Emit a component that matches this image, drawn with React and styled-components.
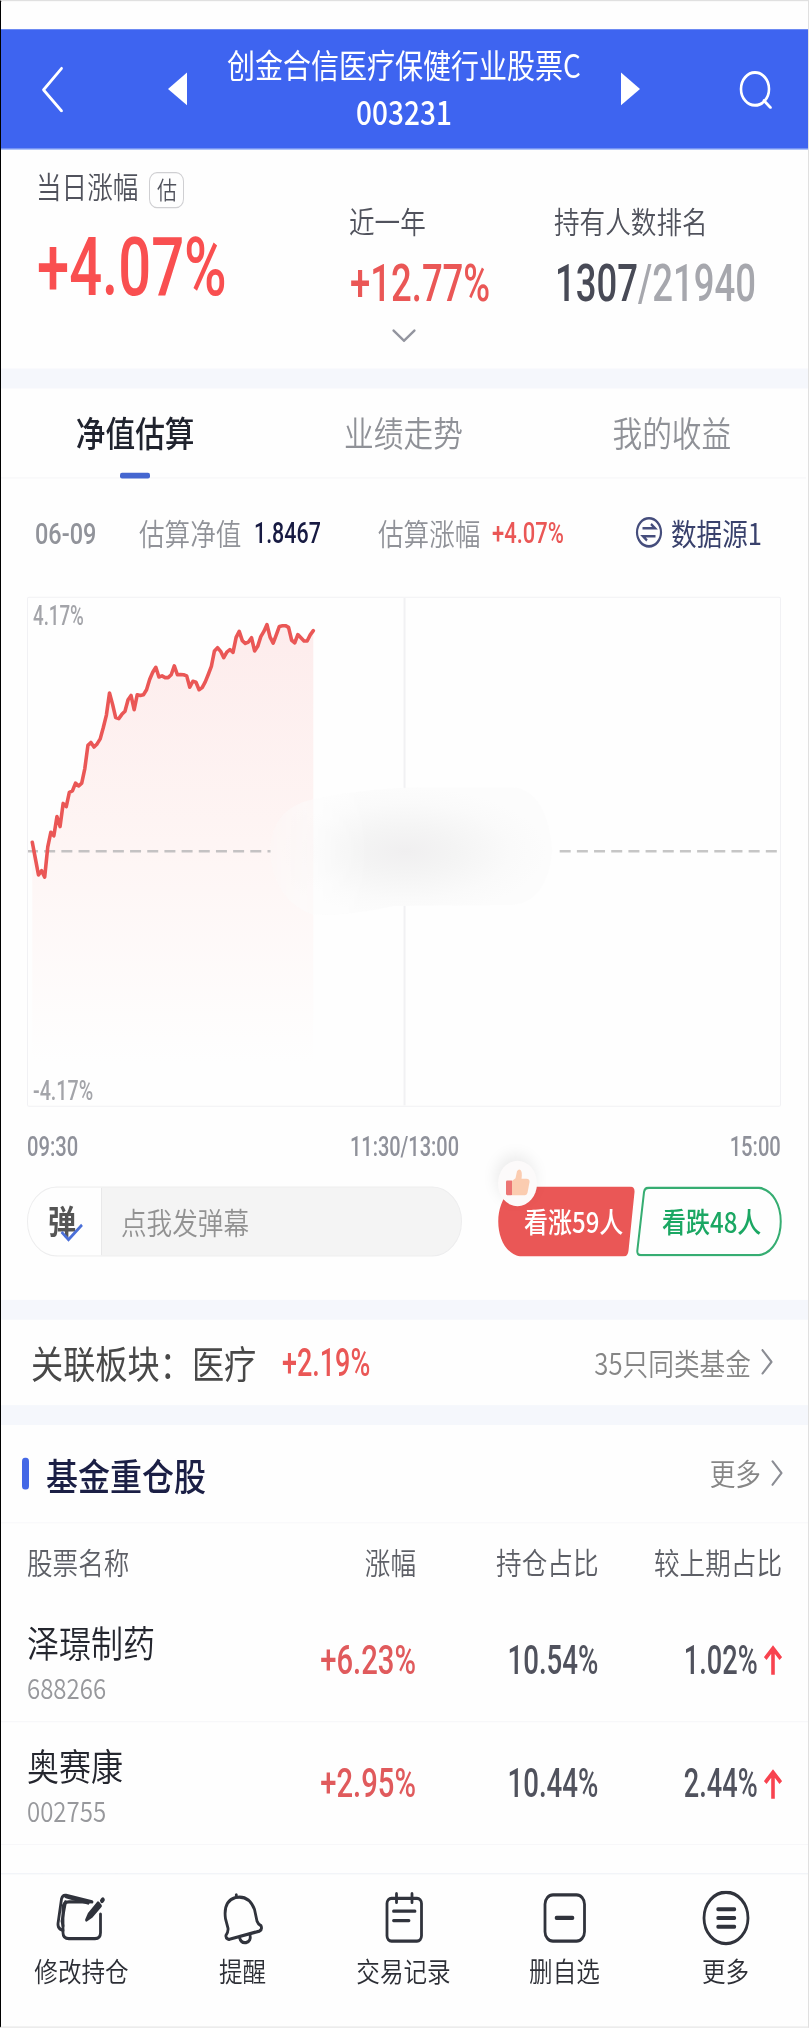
import styled, { createGlobalStyle, css } from "styled-components";

// The whole page is drawn at natural proportions and then stretched
// vertically, v() turns an on-screen height into a page height.
const STRETCH = 1.17;
const v = (px) => `${(px / STRETCH).toFixed(2)}px`;

const RED = "#ea5756";

// intraday estimate, one value per step, measured from the top of the plot
const QUOTES = [
  762, 808, 854, 842, 860, 775, 734, 744, 690, 718, 653, 662, 622, 618, 596,
  604, 596, 555, 490, 482, 495, 486, 472, 440, 405, 343, 375, 412, 415, 403,
  394, 362, 350, 390, 348, 350, 348, 334, 305, 285, 271, 298, 295, 300, 300,
  292, 267, 292, 291, 292, 295, 327, 310, 313, 334, 328, 312, 291, 268, 225,
  216, 226, 244, 228, 221, 229, 187, 170, 196, 204, 200, 188, 225, 212, 185,
  170, 151, 186, 203, 180, 156, 154, 154, 159, 195, 202, 179, 188, 197, 197,
  180, 168,
];

const stocks = [
  {
    name: "泽璟制药",
    code: "688266",
    change: "+6.23%",
    share: "10.54%",
    diff: "1.02%",
  },
  {
    name: "奥赛康",
    code: "002755",
    change: "+2.95%",
    share: "10.44%",
    diff: "2.44%",
  },
];

const Num = ({ children, ...rest }) => (
  <NumBox {...rest}>
    <span>{children}</span>
  </NumBox>
);

const Chevron = ({ w, h, d, color = "#8b8d94", stroke = 2 }) => (
  <svg
    width={w}
    height={h}
    viewBox={`0 0 ${w} ${h}`}
    fill="none"
    stroke={color}
    strokeWidth={stroke}
    strokeLinecap="round"
    strokeLinejoin="round"
  >
    <path d={d} />
  </svg>
);

const RightChevron = () => (
  <Chevron w={12} h={22} d="M1.5 1 L10.5 11 L1.5 21" />
);

const UpArrow = () => (
  <svg
    width="18"
    height="26"
    viewBox="0 0 18 26"
    fill="none"
    stroke="#f8434f"
    strokeWidth="3.6"
  >
    <path d="M9 25.5 V2.5 M1.2 11.5 L9 2.8 L16.8 11.5" />
  </svg>
);

const Chart = () => {
  const points = QUOTES.map((q, i) => [
    4.3 + i * 3.092,
    (q - 76) / 2.8,
  ]);
  const line = points
    .map(([x, y]) => `${x.toFixed(1)},${y.toFixed(1)}`)
    .join(" ");
  const last = points[points.length - 1][0];
  return (
    <Plot>
      <svg viewBox="0 0 753 509" preserveAspectRatio="none">
        <defs>
          <linearGradient id="fall" x1="0" y1="0" x2="0" y2="1">
            <stop offset="0" stopColor="#fdecec" />
            <stop offset="0.5" stopColor="#fef5f4" />
            <stop offset="1" stopColor="#fefefe" />
          </linearGradient>
          <radialGradient id="smudge" cx="0.48" cy="0.5" r="0.5">
            <stop offset="0" stopColor="#f0eff0" />
            <stop offset="0.35" stopColor="#f4f4f4" />
            <stop offset="0.75" stopColor="#fafafa" />
            <stop offset="1" stopColor="#fcfcfc" />
          </radialGradient>
          <linearGradient id="fade" x1="0" y1="0" x2="1" y2="0">
            <stop offset="0" stopColor="#fff" stopOpacity="0.2" />
            <stop offset="0.16" stopColor="#fff" stopOpacity="0.55" />
            <stop offset="0.35" stopColor="#fff" />
          </linearGradient>
          <mask id="edge">
            <rect x="240" y="180" width="290" height="150" fill="url(#fade)" />
          </mask>
        </defs>
        <polygon
          points={`4.3,465 ${line} ${last},465`}
          fill="url(#fall)"
        />
        <path d="M377 0 V509" stroke="#f1f1f3" strokeWidth="2" />
        <path
          d="M-1 254 H243"
          stroke="#c4c2c3"
          strokeWidth="2.6"
          strokeDasharray="11 6.2"
        />
        <path
          d="M532.4 254 H753"
          stroke="#c6c6c6"
          strokeWidth="2.6"
          strokeDasharray="11 6.2"
        />
        <rect x="370" y="192" width="14" height="116" fill="#fafafa" />
        <path
          d="M242 254 Q244 210 286 202 Q340 190 400 190 L486 190 Q520 194 525 254 Q520 304 486 308 L366 309 Q330 318 286 318 Q246 304 242 254Z"
          fill="url(#smudge)"
          mask="url(#edge)"
        />
        <polyline
          points={line}
          fill="none"
          stroke={RED}
          strokeWidth="3.6"
          strokeLinejoin="round"
          strokeLinecap="round"
        />
      </svg>
      <Num $size={23.4} $scale={0.8} $w={52} $color="#a3a4a9">
        4.17%
      </Num>
      <Num $size={23.4} $scale={0.84} $w={60} $color="#a3a4a9">
        -4.17%
      </Num>
    </Plot>
  );
};

const App = () => (
  <>
    <Global />
    <Page>
      <StatusBar />
      <Header>
        <BackSlot>
          <Chevron
            w={24}
            h={40}
            color="#fff"
            stroke={2.6}
            d="M20.5 2.5 L2.5 20.8 L20.5 38.8"
          />
        </BackSlot>
        <Triangle />
        <FundTitle>
          <span>创金合信医疗保健行业股票C</span>
          <FundCode>003231</FundCode>
        </FundTitle>
        <Triangle $right />
        <SearchSlot>
          <svg
            width="36"
            height="34"
            viewBox="0 0 36 34"
            fill="none"
            stroke="#fff"
            strokeWidth="2.6"
          >
            <circle cx="17" cy="17" r="14" />
            <path d="M26 27 L32.5 33" strokeLinecap="round" />
          </svg>
        </SearchSlot>
      </Header>

      <Stats>
        <StatToday>
          <StatLabel>
            <TodayText>当日涨幅</TodayText>
            <Badge>估</Badge>
          </StatLabel>
          <Num $size={69} $scale={0.84} $w={188} $lh={90} $color="#f94f50">
            +4.07%
          </Num>
        </StatToday>
        <Stat $w={205}>
          <StatLabel>近一年</StatLabel>
          <Num $size={44.5} $scale={0.82} $w={140} $lh={62} $color={RED}>
            +12.77%
          </Num>
        </Stat>
        <Stat>
          <StatLabel>持有人数排名</StatLabel>
          <Num $size={44.5} $scale={0.82} $w={200} $lh={62} $color="#484a56">
            1307<i>/21940</i>
          </Num>
        </Stat>
      </Stats>
      <Expand>
        <Chevron
          w={24}
          h={12}
          stroke={2.2}
          color="#93959f"
          d="M1.5 1.5 L12 10.3 L22.5 1.5"
        />
      </Expand>

      <Gap $h={19.5} />

      <Tabs>
        <Tab $active>净值估算</Tab>
        <Tab>业绩走势</Tab>
        <Tab>我的收益</Tab>
      </Tabs>

      <Estimate>
        <Num $size={25.8} $scale={0.91} $w={104} $color="#91939a">
          06-09
        </Num>
        <EstLabel $w={115}>估算净值</EstLabel>
        <Num $size={25.8} $scale={0.83} $w={124} $color="#171a42">
          1.8467
        </Num>
        <EstLabel $w={114}>估算涨幅</EstLabel>
        <Num $size={25.8} $scale={0.85} $w={143} $color={RED}>
          +4.07%
        </Num>
        <Source>
          <svg
            width="28"
            height="28"
            viewBox="0 0 28 28"
            fill="none"
            stroke="#454d7c"
            strokeWidth="2.2"
          >
            <circle cx="14" cy="14" r="12" />
            <path d="M7.5 10.5 H20 L16 6.9 M20.5 17.4 H8 L12 21" />
          </svg>
          数据源1
        </Source>
      </Estimate>

      <Chart />
      <Times>
        <Num $size={23.2} $scale={0.87} $w={51} $color="#8f919a">
          09:30
        </Num>
        <Num $size={23.2} $scale={0.86} $w={109} $color="#8f919a">
          11:30/13:00
        </Num>
        <Num $size={23.2} $scale={0.87} $w={51} $color="#8f919a" $end>
          15:00
        </Num>
      </Times>

      <Actions>
        <Danmu>
          <DanmuToggle>
            弹
            <svg width="26" height="18" viewBox="0 0 26 18" fill="none">
              <path
                d="M2.5 8 L9.5 14.5 L23 2"
                stroke="#4a6fd8"
                strokeWidth="2.6"
              />
            </svg>
          </DanmuToggle>
          <DanmuHint>点我发弹幕</DanmuHint>
        </Danmu>
        <Vote $w={137} $color="#fff" $indent={26}>
          <svg width="137" height="60" viewBox="0 0 137 60">
            <path
              d="M22 0 H132 Q137 0 136.5 5 L130.5 55 Q130 60 125 60 H22 C-7 55 -7 5 22 0Z"
              fill={RED}
            />
          </svg>
          <Thumb>
            <svg width="26" height="28" viewBox="0 0 26 28">
              <rect x="1" y="11" width="6.5" height="12.5" rx="1.2" fill="#ec7473" />
              <path
                d="M7 11.5 L10.5 9 L12 3 Q13.5 1 15.5 2 Q17.5 3.5 16.5 9.5 H21.5 Q25 9.5 24.5 12.5 L22.5 21.5 Q22 23.5 20 23.5 H7Z"
                fill="#fbccb0"
              />
            </svg>
          </Thumb>
          <span>看涨59人</span>
        </Vote>
        <Vote $w={146} $color="#1ba763" $indent={26}>
          <svg width="146" height="60" viewBox="0 0 146 60" fill="none">
            <path
              d="M13 1.2 H123 C152 5 152 55 123 58.8 H5 Q1 58.8 1.3 55 L8 5 Q8.6 1.2 13 1.2Z"
              stroke="#36ad72"
              strokeWidth="2"
            />
          </svg>
          <span>看跌48人</span>
        </Vote>
      </Actions>

      <Gap $h={20} />
      <Related>
        <RelatedName>关联板块：医疗</RelatedName>
        <Num $size={33.3} $scale={0.81} $w={100} $color={RED}>
          +2.19%
        </Num>
        <More $right={35}>
          <span>35只同类基金</span>
          <RightChevron />
        </More>
      </Related>
      <Gap $h={20} />

      <SectionHead>
        <Marker />
        <SectionTitle>基金重仓股</SectionTitle>
        <More $right={25}>
          <span>更多</span>
          <RightChevron />
        </More>
      </SectionHead>
      <ColumnHead>
        <span>股票名称</span>
        <span>涨幅</span>
        <span>持仓占比</span>
        <span>较上期占比</span>
      </ColumnHead>
      {stocks.map((stock) => (
        <StockRow key={stock.code}>
          <StockName>
            {stock.name}
            <small>{stock.code}</small>
          </StockName>
          <Num $size={34.8} $scale={0.84} $w={120} $color="#e05a5c" $end>
            {stock.change}
          </Num>
          <Num $size={34.8} $scale={0.795} $w={120} $color="#50525d" $end>
            {stock.share}
          </Num>
          <Diff>
            <Num $size={34.8} $scale={0.78} $w={80} $color="#50525d" $end>
              {stock.diff}
            </Num>
            <UpArrow />
          </Diff>
        </StockRow>
      ))}
      <StockPeek>
        <StockName>海思科</StockName>
      </StockPeek>

      <BottomBar>
        <BarItem $shift={2.5}>
          <svg width="54" height="48" viewBox="0 0 54 48">
            <path d="M11 34 L8.5 33 Q5.5 31 6 28 L9.5 7 Q10.5 3.5 14 4 L40 9.5" />
            <path d="M11 30 L10 26 L13.5 9.5" />
            <path d="M14 5 L36 10.5" />
            <path d="M38 9.5 H17 Q11 9.5 11 15 V36 Q11 41 17 41 H43 Q48.5 41 48.5 36 V20" />
            <path d="M34.5 25 L37 20 L46 10.5 L48.5 13 L39.5 22Z" fill="#30333c" />
            <path d="M50 8.5 L50.8 7.8" strokeWidth="4" />
          </svg>
          修改持仓
        </BarItem>
        <BarItem $shift={4.5}>
          <svg width="54" height="48" viewBox="0 0 54 48">
            <path d="M25.3 5.5 V3.5 M16.5 41 Q14.5 40 15 38 Q17.5 35 17 32 L14.5 24 Q12 9 24.5 5.8 Q38 3.5 43.5 16 L46 26 Q47 28.5 50 30 Q51.5 33 48.5 34.5 L18.5 41.5 Q17 41.8 16.5 41Z" />
            <path d="M28.5 40 Q30 45 35 44.3 Q40.5 43 39 37.5" />
          </svg>
          提醒
        </BarItem>
        <BarItem>
          <svg width="54" height="48" viewBox="0 0 54 48">
            <rect x="10" y="6.5" width="34.5" height="36.5" rx="4.5" />
            <path d="M19.5 2.5 V10 M35 2.5 V10 M16.5 17.5 H38 M16.5 25.5 H32" />
          </svg>
          交易记录
        </BarItem>
        <BarItem>
          <svg width="54" height="48" viewBox="0 0 54 48">
            <rect x="7" y="3.5" width="39.5" height="39.5" rx="8" />
            <path d="M18.5 23.3 H34.5" strokeWidth="3.6" />
          </svg>
          删自选
        </BarItem>
        <BarItem>
          <svg width="54" height="48" viewBox="0 0 54 48">
            <circle cx="27" cy="23.3" r="22" />
            <path d="M19 15.8 H35.5 M19 23.3 H35.5 M19 30.8 H35.5" strokeWidth="3.4" />
          </svg>
          更多
        </BarItem>
      </BottomBar>
    </Page>
  </>
);

const Global = createGlobalStyle`
  body {
    margin: 0;
    background: #fff;
  }
  #root {
    height: 2028px;
  }
  * {
    box-sizing: border-box;
  }
  svg {
    flex: none;
    display: block;
  }
`;

const Page = styled.div`
  width: 809px;
  height: ${v(2028)};
  display: flex;
  flex-direction: column;
  overflow: hidden;
  border: 1px solid #e0e0e0;
  border-left-color: #000;
  background: #fefefe;
  font-family: "Noto Sans CJK SC", sans-serif;
  font-weight: 350;
  line-height: 1;
  white-space: nowrap;
  transform: scaleY(${STRETCH});
  transform-origin: 0 0;
  > * {
    flex-shrink: 0;
  }
`;

const NumBox = styled.span`
  display: flex;
  flex: none;
  width: ${(p) => p.$w}px;
  justify-content: ${(p) => (p.$end ? "flex-end" : "flex-start")};
  font-family: Roboto, sans-serif;
  font-size: ${(p) => p.$size}px;
  font-weight: 500;
  line-height: ${(p) => (p.$lh ? v(p.$lh) : 1)};
  color: ${(p) => p.$color};
  span {
    transform: scaleX(${(p) => p.$scale});
    transform-origin: ${(p) => (p.$end ? "100% 50%" : "0 50%")};
  }
  i {
    font-style: normal;
    font-weight: 500;
    color: #a6a7ad;
  }
`;

const StatusBar = styled.div`
  height: ${v(28)};
`;

const Header = styled.header`
  display: flex;
  align-items: center;
  height: ${v(120.4)};
  background: #3e64f0;
  border-bottom: 1px solid #c4d6fb;
  color: #fff;
`;

const BackSlot = styled.div`
  width: 167px;
  padding-left: 40px;
`;

const Triangle = styled.i`
  border: solid transparent;
  border-width: 14.7px 0;
  ${(p) =>
    p.$right
      ? css`
          border-left: 19px solid #fff;
        `
      : css`
          border-right: 19px solid #fff;
        `}
`;

const FundTitle = styled.h1`
  width: 434px;
  margin: 0;
  padding-bottom: 1px;
  display: flex;
  flex-direction: column;
  align-items: center;
  font-size: 28px;
  font-weight: 400;
  line-height: ${v(47.5)};
`;

const FundCode = styled.span`
  margin-top: -0.5px;
  font-weight: 500;
`;

const SearchSlot = styled.div`
  margin-left: 98px;
`;

const Stats = styled.section`
  display: flex;
  height: ${v(176)};
  padding: ${v(22)} 0 0 35px;
`;

const StatToday = styled.div`
  width: 313px;
  > span {
    margin-top: ${v(15.5)};
    margin-left: 1px;
  }
`;

const Stat = styled.div`
  width: ${(p) => p.$w}px;
  padding-top: ${v(29.5)};
  > span {
    margin-top: ${v(14.5)};
  }
`;

const StatLabel = styled.div`
  display: flex;
  align-items: center;
  height: ${v(37)};
  font-size: 25.6px;
  color: #50525c;
  & + span {
    margin-left: 1px;
  }
`;

const TodayText = styled.span`
  padding-bottom: 9px;
`;

const Badge = styled.span`
  display: flex;
  align-items: center;
  justify-content: center;
  width: 35px;
  height: ${v(37)};
  margin-left: 11px;
  border: 1.6px solid #cfcfd2;
  border-radius: 8px;
  font-size: 20px;
`;

const Expand = styled.div`
  display: flex;
  justify-content: center;
  height: ${v(43)};
  padding: ${v(3)} 2px 0 0;
`;

const Gap = styled.div`
  height: ${(p) => v(p.$h)};
  background: #f5f7fc;
`;

const Tabs = styled.nav`
  display: grid;
  grid-template-columns: repeat(3, 1fr);
  height: ${v(90)};
  margin-right: 2px;
  border-bottom: 1.5px solid #f6f6f8;
`;

const Tab = styled.div`
  display: flex;
  flex-direction: column;
  align-items: center;
  padding-top: ${v(24)};
  font-size: 29.7px;
  line-height: ${v(42)};
  color: ${(p) => (p.$active ? "#20232e" : "#8f9197")};
  font-weight: ${(p) => (p.$active ? 500 : 350)};
  ${(p) =>
    p.$active &&
    css`
      &::after {
        content: "";
        width: 30px;
        height: ${v(6)};
        margin-top: ${v(19)};
        border-radius: 2px;
        background: #4466d0;
      }
    `}
`;

const Estimate = styled.div`
  display: flex;
  align-items: center;
  height: ${v(111)};
  padding-left: 34px;
  > span:first-child {
    margin-top: 2px;
  }
`;

const EstLabel = styled.span`
  width: ${(p) => p.$w}px;
  padding-bottom: 2.5px;
  font-size: 25.6px;
  color: #909298;
`;

const Source = styled.span`
  display: flex;
  align-items: center;
  gap: 8px;
  padding-bottom: 3px;
  font-size: 25.6px;
  font-weight: 400;
  color: #39416c;
  svg {
    margin-top: 2px;
  }
`;

const Plot = styled.div`
  position: relative;
  display: flex;
  flex-direction: column;
  justify-content: space-between;
  width: 754px;
  height: ${v(510)};
  margin: ${v(7.5)} 0 0 26px;
  padding: 4px 0 0 5px;
  border: 1.6px solid #f1f1f4;
  border-radius: 2px;
  svg {
    position: absolute;
    inset: 0;
    width: 100%;
    height: 100%;
  }
  > span {
    position: relative;
  }
`;

const Times = styled.div`
  display: flex;
  justify-content: space-between;
  align-items: center;
  height: ${v(80)};
  padding: 1px 27px 0 26px;
`;

const Actions = styled.div`
  display: flex;
  height: ${v(113.5)};
`;

const Danmu = styled.div`
  display: flex;
  width: 435px;
  height: 60px;
  margin: 0 36px 0 26px;
  overflow: hidden;
  border: 1.5px solid #ededee;
  border-radius: 30px;
  background: #f4f4f4;
`;

const DanmuToggle = styled.div`
  position: relative;
  display: flex;
  align-items: center;
  width: 74px;
  padding-left: 20px;
  padding-bottom: 2px;
  border-right: 1px solid #e8e8e9;
  background: #fefefe;
  font-size: 28px;
  font-weight: 700;
  color: #555;
  svg {
    position: absolute;
    left: 31px;
    bottom: 10px;
  }
`;

const DanmuHint = styled.div`
  padding-left: 19px;
  font-size: 25.6px;
  line-height: 57px;
  color: #929292;
`;

const Vote = styled.div`
  position: relative;
  width: ${(p) => p.$w}px;
  height: 60px;
  margin-right: 1px;
  padding-left: ${(p) => p.$indent}px;
  font-size: 24px;
  font-weight: 500;
  line-height: 60px;
  color: ${(p) => p.$color};
  > svg {
    position: absolute;
    inset: 0;
  }
  > span {
    position: relative;
  }
`;

const Thumb = styled.div`
  position: absolute;
  top: -22px;
  left: 0;
  display: flex;
  align-items: center;
  justify-content: center;
  width: 39px;
  height: 39px;
  border-radius: 50%;
  background: #fcfafa;
  box-shadow: -2px -5px 14px rgba(0, 0, 0, 0.08);
`;

const Related = styled.section`
  display: flex;
  align-items: center;
  height: ${v(85)};
  padding-left: 30px;
`;

const RelatedName = styled.span`
  width: 251px;
  font-size: 32.2px;
  font-weight: 400;
  color: #484848;
`;

const More = styled.div`
  display: flex;
  align-items: center;
  gap: 10px;
  margin-left: auto;
  padding-right: ${(p) => p.$right}px;
  font-size: 25.7px;
  color: #868686;
  span {
    padding-bottom: 2px;
  }
`;

const SectionHead = styled.div`
  display: flex;
  align-items: center;
  height: ${v(98)};
  border-bottom: 1.5px solid #f8f8fa;
`;

const Marker = styled.i`
  width: 7px;
  height: ${v(31)};
  margin-left: 21px;
  border-radius: 3px;
  background: #4468e6;
`;

const SectionTitle = styled.h2`
  margin: 2px 0 0 17px;
  font-size: 32px;
  font-weight: 500;
  color: #1b1f45;
`;

const columns = css`
  display: grid;
  grid-template-columns: 160px 229px 182.5px 183.5px;
  align-items: center;
  padding-left: 26px;
`;

const ColumnHead = styled.div`
  ${columns}
  height: ${v(76)};
  font-size: 25.6px;
  color: #5d5f66;
  span + span {
    text-align: right;
  }
`;

const StockRow = styled.div`
  ${columns}
  height: ${v(123.3)};
  border-bottom: 1.5px solid #f7f7f9;
  > span {
    justify-self: end;
    padding-top: 1px;
  }
`;

const StockName = styled.div`
  padding-top: ${v(8)};
  font-size: 32px;
  line-height: ${v(42)};
  color: #24262e;
  small {
    display: block;
    margin-top: ${v(5)};
    font-size: 24px;
    line-height: ${v(38)};
    color: #97989c;
  }
`;

const Diff = styled.div`
  display: flex;
  align-items: center;
  justify-content: flex-end;
  gap: 6px;
  padding-top: 1px;
`;

const StockPeek = styled.div`
  height: ${v(27.5)};
  padding: ${v(14.8)} 0 0 26px;
  overflow: hidden;
`;

const BottomBar = styled.footer`
  display: grid;
  grid-template-columns: repeat(5, 1fr);
  flex: 1;
  padding-right: 2px;
  border-top: 1.6px solid #f0f2f7;
  background: #fefefe;
`;

const BarItem = styled.div`
  display: flex;
  flex-direction: column;
  align-items: center;
  gap: ${v(7)};
  padding-top: ${v(16)};
  font-size: 23.6px;
  line-height: ${v(36)};
  color: #2c2e35;
  svg {
    margin-right: ${(p) => (p.$shift || 0) * 2}px;
    fill: none;
    stroke: #30333c;
    stroke-width: 2.8;
    stroke-linecap: round;
    stroke-linejoin: round;
  }
`;

export default App;
